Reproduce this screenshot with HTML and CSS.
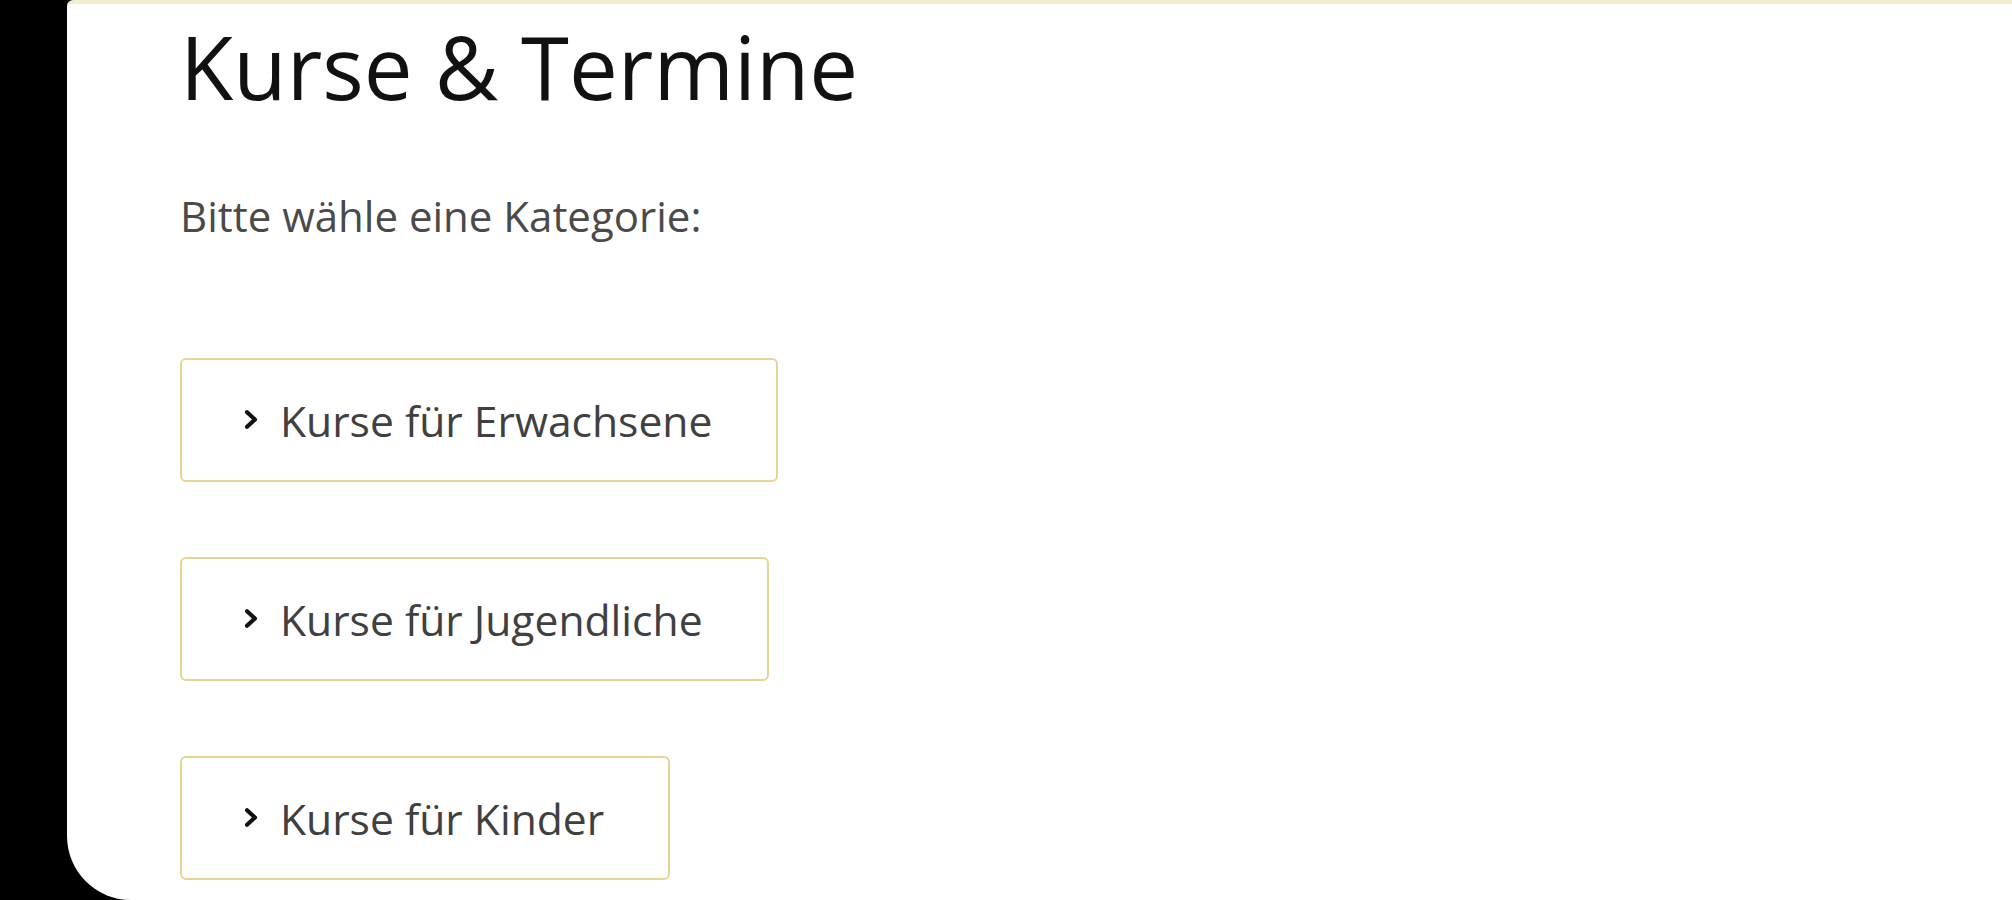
FILE: index.html
```html
<!DOCTYPE html>
<html lang="de">
<head>
<meta charset="utf-8">
<title>Kurse &amp; Termine</title>
<link rel="stylesheet" href="styles.css">
</head>
<body>
<div class="page">
  <main class="panel">
    <h1 class="title">Kurse &amp; Termine</h1>
    <p class="intro">Bitte wähle eine Kategorie:</p>
    <div class="categories">
      <a class="cat" href="#"><svg class="chev" viewBox="0 0 12 16" aria-hidden="true"><path d="M3 2.5 L9 8 L3 13.5" fill="none" stroke="#111" stroke-width="3.2" stroke-linecap="round" stroke-linejoin="round"/></svg><span>Kurse für Erwachsene</span></a>
      <a class="cat" href="#"><svg class="chev" viewBox="0 0 12 16" aria-hidden="true"><path d="M3 2.5 L9 8 L3 13.5" fill="none" stroke="#111" stroke-width="3.2" stroke-linecap="round" stroke-linejoin="round"/></svg><span>Kurse für Jugendliche</span></a>
      <a class="cat" href="#"><svg class="chev" viewBox="0 0 12 16" aria-hidden="true"><path d="M3 2.5 L9 8 L3 13.5" fill="none" stroke="#111" stroke-width="3.2" stroke-linecap="round" stroke-linejoin="round"/></svg><span>Kurse für Kinder</span></a>
    </div>
  </main>
</div>
</body>
</html>
```
FILE: styles.css
```css
html, body {
  margin: 0;
  padding: 0;
  background: #000;
  height: 100%;
  overflow: hidden;
}
.page {
  display: flex;
  height: 900px;
  padding-left: 67px;
}
.panel {
  flex: 1;
  background: #fff;
  border-top: 4px solid #f4edcf;
  border-top-left-radius: 6px;
  border-bottom-left-radius: 64px;
  padding: 10px 0 0 113px;
  font-family: "Open Sans", "Noto Sans", sans-serif;
  box-sizing: border-box;
}
.title {
  margin: 0;
  font-size: 87px;
  font-weight: 400;
  line-height: 1.2;
  color: #111;
}
.intro {
  margin: 71px 0 0;
  font-size: 42px;
  line-height: 1.3;
  color: #4a4a4a;
}
.categories {
  display: flex;
  flex-direction: column;
  align-items: flex-start;
  gap: 75px;
  margin-top: 114px;
}
.cat {
  display: flex;
  align-items: center;
  gap: 21px;
  height: 124px;
  box-sizing: border-box;
  padding: 0 64px 0 61px;
  border: 2px solid #e6d58e;
  border-radius: 6px;
  text-decoration: none;
  color: #404040;
  font-size: 42.6px;
}
.chev {
  width: 16px;
  height: 21px;
  flex: none;
}
```
